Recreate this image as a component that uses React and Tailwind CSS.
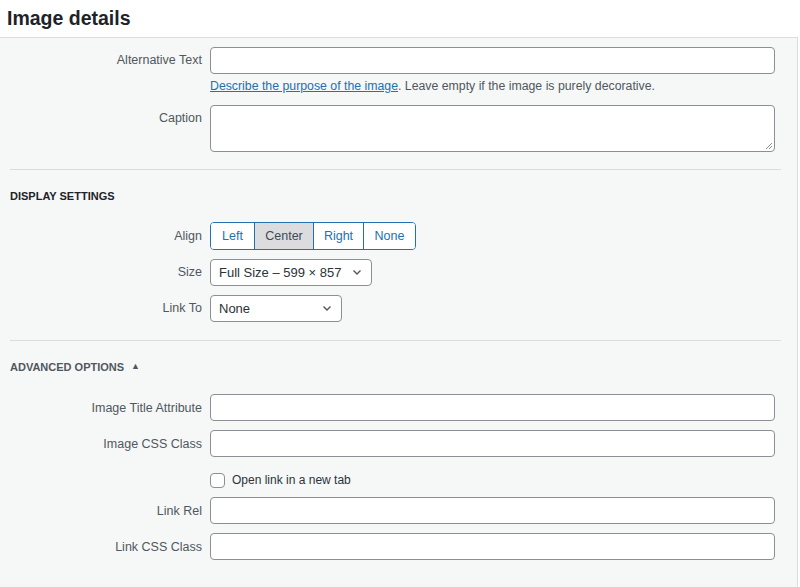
import React from "react";

const font = { fontFamily: '"Liberation Sans", Arial, sans-serif' };

function Row({ label, children, top = false, className = "" }) {
  return (
    <div className={`flex ${top ? "items-start" : "items-center"} ${className}`}>
      <div className={`w-[202px] shrink-0 text-right text-[12.5px] text-[#50575e] ${top ? "pt-[4px]" : ""}`}>{label}</div>
      <div className="ml-[8px] w-[565px]">{children}</div>
    </div>
  );
}

function TextInput() {
  return <div className="h-[27px] w-full rounded-[4px] border border-[#8c8f94] bg-white" />;
}

function Select({ value, width }) {
  return (
    <div className={`flex h-[27px] items-center justify-between rounded-[4px] border border-[#8c8f94] bg-white pl-[8px] pr-[8px] text-[13px] text-[#2c3338] ${width}`}>
      <span>{value}</span>
      <svg width="12" height="12" viewBox="0 0 12 12" fill="none">
        <path d="M2.5 4.5 L6 8 L9.5 4.5" stroke="#50575e" strokeWidth="1.4" />
      </svg>
    </div>
  );
}

export default function App() {
  return (
    <div className="h-[587px] w-[800px] overflow-hidden bg-white" style={font}>
      <div className="flex h-[37px] items-center pl-[7px]">
        <h1 className="text-[19.5px] font-bold text-[#1d2327]">Image details</h1>
      </div>
      <div className="h-[550px] w-[798px] border-t border-r border-[#dcdcde] bg-[#f6f7f7]">
        <div className="pt-[9px]">
          <Row label="Alternative Text">
            <TextInput />
          </Row>
          <div className="ml-[210px] mt-[3px] text-[12.3px] text-[#50575e]">
            <span className="text-[#2271b1] underline">Describe the purpose of the image</span>. Leave empty if the image is purely decorative.
          </div>
          <Row label="Caption" top className="mt-[10px]">
            <div className="relative h-[47px] w-full rounded-[4px] border border-[#8c8f94] bg-white">
              <svg className="absolute bottom-[1px] right-[1px]" width="8" height="8" viewBox="0 0 8 8">
                <path d="M7 1 L1 7 M7 4 L4 7" stroke="#8c8f94" strokeWidth="1" />
              </svg>
            </div>
          </Row>
          <div className="ml-[10px] mt-[17px] h-px w-[771px] bg-[#dcdcde]" />
          <div className="ml-[10px] mt-[18px] text-[11px] font-bold uppercase text-[#1d2327]">Display Settings</div>
          <Row label="Align" className="mt-[17px]">
            <div className="flex h-[28px] w-[206px] overflow-hidden rounded-[4px] border border-[#2271b1] text-[12.5px] text-[#2271b1]">
              <div className="flex w-[44px] items-center justify-center border-r border-[#2271b1] bg-white">Left</div>
              <div className="flex w-[59px] items-center justify-center border-r border-[#2271b1] bg-[#dcdcde] text-[#3c4a5a]">Center</div>
              <div className="flex w-[50px] items-center justify-center border-r border-[#2271b1] bg-white">Right</div>
              <div className="flex flex-1 items-center justify-center bg-white">None</div>
            </div>
          </Row>
          <Row label="Size" className="mt-[9px]">
            <Select value="Full Size – 599 × 857" width="w-[162px]" />
          </Row>
          <Row label="Link To" className="mt-[9px]">
            <Select value="None" width="w-[132px]" />
          </Row>
          <div className="ml-[10px] mt-[18px] h-px w-[771px] bg-[#dcdcde]" />
          <div className="ml-[10px] mt-[18px] flex items-center gap-[7px] text-[11px] font-bold uppercase text-[#50575e]">
            <span>Advanced Options</span>
            <span className="text-[9px]">▲</span>
          </div>
          <Row label="Image Title Attribute" className="mt-[19px]">
            <TextInput />
          </Row>
          <Row label="Image CSS Class" className="mt-[9px]">
            <TextInput />
          </Row>
          <div className="ml-[210px] mt-[14px] flex items-center gap-[7px]">
            <div className="h-[15px] w-[15px] rounded-[4px] border border-[#8c8f94] bg-white" />
            <span className="text-[12px] text-[#2c3338]">Open link in a new tab</span>
          </div>
          <Row label="Link Rel" className="mt-[8px]">
            <TextInput />
          </Row>
          <Row label="Link CSS Class" className="mt-[9px]">
            <TextInput />
          </Row>
        </div>
      </div>
    </div>
  );
}
